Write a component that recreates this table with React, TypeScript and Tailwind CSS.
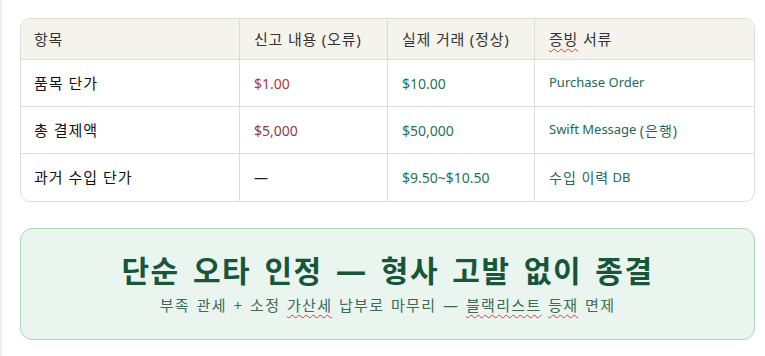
import React from 'react';

const font = { fontFamily: '"Noto Sans", "Noto Sans CJK KR", sans-serif' };

interface Row {
  item: string;
  reported: string;
  actual: string;
  doc: React.ReactNode;
  reportedTone: string;
}

const ko = 'text-[14px] tracking-[1px]';

const rows: Row[] = [
  { item: '품목 단가', reported: '$1.00', actual: '$10.00', doc: 'Purchase Order', reportedTone: 'text-[#b8323a]' },
  {
    item: '총 결제액',
    reported: '$5,000',
    actual: '$50,000',
    doc: <>Swift Message <span className={ko}>(은행)</span></>,
    reportedTone: 'text-[#8c3a3f]',
  },
  {
    item: '과거 수입 단가',
    reported: '—',
    actual: '$9.50~$10.50',
    doc: <><span className={ko}>수입 이력</span> DB</>,
    reportedTone: 'text-[#222]',
  },
];

const Squiggle: React.FC<{ children: React.ReactNode }> = ({ children }) => (
  <span className="underline decoration-wavy decoration-[#e53935] decoration-1 underline-offset-[3px]">{children}</span>
);

export default function App() {
  return (
    <div className="min-h-[356px] w-[765px] bg-white border-l-2 border-[#f0f0f0] pt-[18px] pl-[18px] pr-[10px]" style={font}>
      {/* Comparison table */}
      <div className="rounded-[10px] border border-[#dcdcdc] overflow-hidden">
        <div className="grid grid-cols-[219px_148px_147px_1fr] bg-[#f4f3ec] h-[41px] items-center text-[15px] tracking-[0.8px] text-[#333] border-b border-[#dcdcdc]">
          <div className="pl-[13px] h-full flex items-center border-r border-[#dcdcdc]">항목</div>
          <div className="pl-[14px] h-full flex items-center border-r border-[#dcdcdc]">신고 내용 (오류)</div>
          <div className="pl-[14px] h-full flex items-center border-r border-[#dcdcdc]">실제 거래 (정상)</div>
          <div className="pl-[14px] h-full flex items-center"><Squiggle>증빙</Squiggle>&nbsp;서류</div>
        </div>
        {rows.map((r, i) => (
          <div
            key={r.item}
            className={`grid grid-cols-[219px_148px_147px_1fr] h-[47px] items-center ${i < rows.length - 1 ? 'border-b border-[#dcdcdc]' : ''}`}
          >
            <div className="pl-[13px] h-full flex items-center border-r border-[#dcdcdc] text-[15px] tracking-[1px] text-[#111]">{r.item}</div>
            <div className={`pl-[14px] h-full flex items-center border-r border-[#dcdcdc] text-[14px] ${r.reportedTone}`}>{r.reported}</div>
            <div className="pl-[14px] h-full flex items-center border-r border-[#dcdcdc] text-[14px] text-[#1d7455]">{r.actual}</div>
            <div className="pl-[14px] h-full flex items-center text-[13px] text-[#22695a] whitespace-pre">{r.doc}</div>
          </div>
        ))}
      </div>

      {/* Verdict box */}
      <div className="mt-[26px] h-[112px] rounded-[12px] border border-[#a9d8b8] bg-[#ebf5ef] flex flex-col items-center justify-center">
        <div className="text-[30px] font-bold text-[#18563a] leading-tight tracking-[1.5px] [word-spacing:4px]">
          단순 오타 인정 — 형사 고발 없이 종결
        </div>
        <div className="mt-[5px] text-[15px] text-[#3c6a57] tracking-[1.3px] [word-spacing:1.5px]">
          부족 관세 + 소정 <Squiggle>가산세</Squiggle> 납부로 마무리 — <Squiggle>블랙리스트</Squiggle> <Squiggle>등재</Squiggle> 면제
        </div>
      </div>
    </div>
  );
}
